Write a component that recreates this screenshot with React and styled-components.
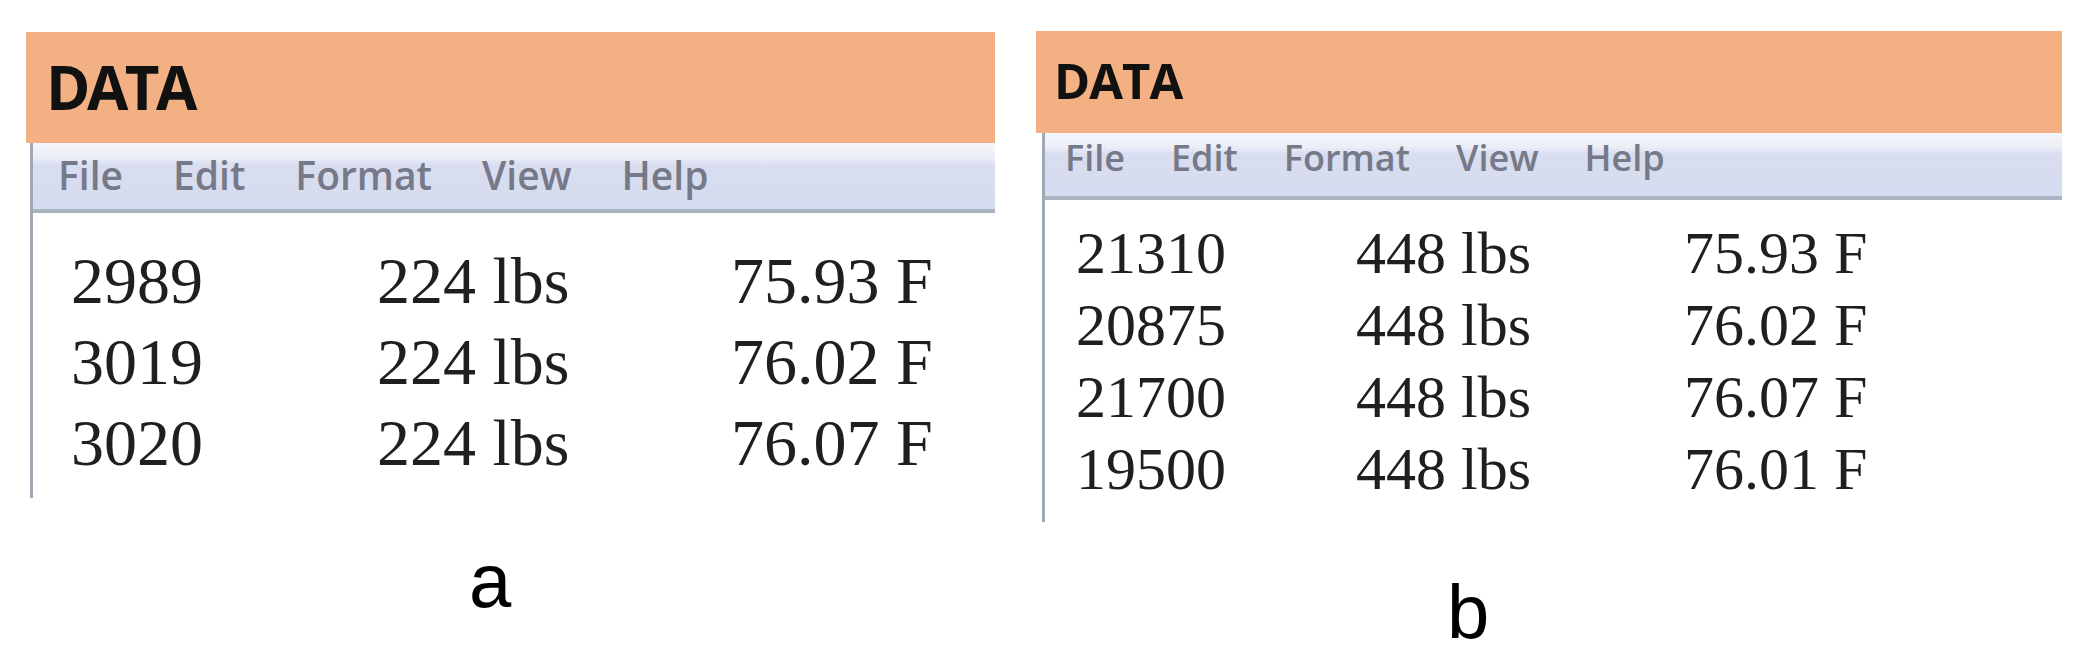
import React from "react";
import styled, { createGlobalStyle } from "styled-components";

const Global = createGlobalStyle`
  html, body { margin: 0; padding: 0; background: #ffffff; }
  body { width: 2091px; height: 668px; overflow: hidden; }
`;

const Page = styled.div`
  display: flex;
  align-items: flex-start;
  gap: 41px;
  padding: 31px 0 0 26px;
  box-sizing: border-box;
  width: 2091px;
  height: 668px;
`;

const Figure = styled.div`
  display: flex;
  flex-direction: column;
  width: ${(p) => p.$w}px;
  margin-top: ${(p) => p.$top}px;
`;

const Header = styled.div`
  box-sizing: border-box;
  height: ${(p) => p.$h}px;
  padding: ${(p) => p.$pt}px 0 0 ${(p) => p.$pl}px;
  background: #f2b083;
  font-family: "Open Sans", "Liberation Sans", sans-serif;
  font-weight: 700;
  font-size: ${(p) => p.$fs}px;
  line-height: ${(p) => p.$fs}px;
  letter-spacing: ${(p) => p.$ls}px;
  color: #111111;
`;

const Body = styled.div`
  margin-left: ${(p) => p.$inset}px;
  border-left: 3px solid #9ea8b6;
  display: flex;
  flex-direction: column;
`;

const Menu = styled.div`
  box-sizing: border-box;
  height: ${(p) => p.$h}px;
  display: flex;
  gap: ${(p) => p.$gap}px;
  padding: ${(p) => p.$pt}px 0 0 ${(p) => p.$pl}px;
  background: linear-gradient(
    to bottom,
    #f5f6fb 0%,
    #eceef7 22%,
    #d8ddef 34%,
    #d6dcef 100%
  );
  border-bottom: 4px solid #aab4c1;
  font-family: "Open Sans", "Liberation Sans", sans-serif;
  font-weight: 600;
  font-size: ${(p) => p.$fs}px;
  line-height: ${(p) => p.$fs}px;
  color: #767988;
`;

const MenuItem = styled.span``;

const Content = styled.div`
  box-sizing: border-box;
  height: ${(p) => p.$h}px;
  padding: ${(p) => p.$pt}px 0 0 ${(p) => p.$pl}px;
  background: #ffffff;
  display: grid;
  grid-template-columns: ${(p) => p.$cols};
  grid-auto-rows: ${(p) => p.$lh}px;
  align-content: start;
  font-family: "Liberation Serif", "Times New Roman", serif;
  font-size: ${(p) => p.$fs}px;
  line-height: ${(p) => p.$lh}px;
  color: #1f1f1f;
`;

const Cell = styled.span`
  white-space: nowrap;
`;

const Caption = styled.div`
  margin-top: ${(p) => p.$mt}px;
  padding-left: ${(p) => p.$pl}px;
  font-family: "Liberation Sans", Arial, sans-serif;
  font-size: 76px;
  line-height: 76px;
  color: #000000;
`;

const menuItems = ["File", "Edit", "Format", "View", "Help"];

const panels = [
  {
    key: "a",
    width: 969,
    top: 1,
    header: { h: 111, pt: 25, pl: 20, fs: 60, ls: -3.5 },
    inset: 4,
    menu: { h: 70, pt: 12, pl: 25, fs: 39, gap: 50 },
    content: { h: 285, pt: 27, pl: 38, fs: 66, lh: 81, cols: "306px 354px auto" },
    rows: [
      ["2989", "224 lbs", "75.93 F"],
      ["3019", "224 lbs", "76.02 F"],
      ["3020", "224 lbs", "76.07 F"],
    ],
    caption: { mt: 45, pl: 443 },
  },
  {
    key: "b",
    width: 1026,
    top: 0,
    header: { h: 102, pt: 25, pl: 18, fs: 49, ls: -1 },
    inset: 6,
    menu: { h: 67, pt: 7, pl: 20, fs: 36, gap: 46 },
    content: { h: 322, pt: 17, pl: 31, fs: 60, lh: 72, cols: "280px 328px auto" },
    rows: [
      ["21310", "448 lbs", "75.93 F"],
      ["20875", "448 lbs", "76.02 F"],
      ["21700", "448 lbs", "76.07 F"],
      ["19500", "448 lbs", "76.01 F"],
    ],
    caption: { mt: 52, pl: 411 },
  },
];

export default function App() {
  return (
    <>
      <Global />
      <Page>
        {panels.map((p) => (
          <Figure key={p.key} $w={p.width} $top={p.top}>
            <Header
              $h={p.header.h}
              $pt={p.header.pt}
              $pl={p.header.pl}
              $fs={p.header.fs}
              $ls={p.header.ls}
            >
              DATA
            </Header>
            <Body $inset={p.inset}>
              <Menu
                $h={p.menu.h}
                $pt={p.menu.pt}
                $pl={p.menu.pl}
                $fs={p.menu.fs}
                $gap={p.menu.gap}
              >
                {menuItems.map((m) => (
                  <MenuItem key={m}>{m}</MenuItem>
                ))}
              </Menu>
              <Content
                $h={p.content.h}
                $pt={p.content.pt}
                $pl={p.content.pl}
                $fs={p.content.fs}
                $lh={p.content.lh}
                $cols={p.content.cols}
              >
                {p.rows.map((r, i) =>
                  r.map((c, j) => <Cell key={`${i}-${j}`}>{c}</Cell>)
                )}
              </Content>
            </Body>
            <Caption $mt={p.caption.mt} $pl={p.caption.pl}>
              {p.key}
            </Caption>
          </Figure>
        ))}
      </Page>
    </>
  );
}
